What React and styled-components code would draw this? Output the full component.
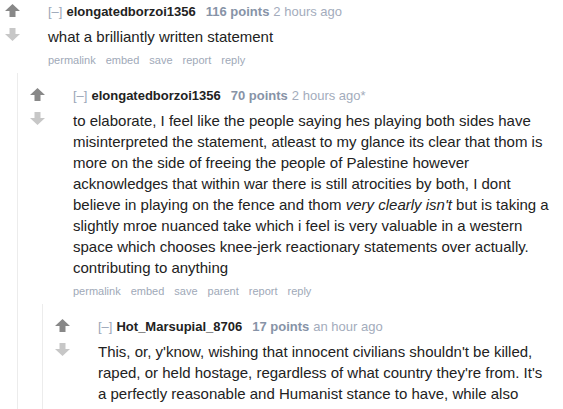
import React from 'react';
import styled, { createGlobalStyle, css } from 'styled-components';

const GlobalStyle = createGlobalStyle`
	html, body {
		margin: 0;
		padding: 0;
		background: #fff;
		font-family: 'Liberation Sans', Arial, sans-serif;
	}
`;

const Page = styled.div`
	width: 563px;
	height: 409px;
	overflow: hidden;
	padding-right: 11px;
	box-sizing: border-box;
`;

const CommentBox = styled.div`
	padding-top: 15px;

	${p =>
		p.$top
			? css`
					margin-left: -7px;
					padding-top: 4px;
			  `
			: css`
					margin-left: 24px;
					margin-top: 6px;
					border-left: 1px solid #ececec;
			  `};
`;

const Entry = styled.div`
	display: flex;
	align-items: flex-start;
`;

const Votes = styled.div`
	flex: 0 0 30px;
	margin-left: 4px;
	margin-right: 21px;
	display: flex;
	flex-direction: column;
	align-items: center;
	gap: 11px;
`;

const Content = styled.div`
	flex: 1;
	min-width: 0;
`;

const Tagline = styled.div`
	font-size: 13px;
	line-height: 16px;
	color: #a3acbc;
	white-space: nowrap;
`;

const Expand = styled.span`
	color: #9ba6b8;
	margin-right: 4px;
`;

const Author = styled.span`
	font-weight: bold;
	color: #222;
	margin-right: 10px;
`;

const Score = styled.span`
	font-weight: bold;
	color: #8793a7;
	margin-right: 4px;
`;

const Body = styled.div`
	margin-top: 6px;
	font-size: 15px;
	line-height: 21px;
	color: #222;

	p {
		margin: 0;
	}
`;

const Links = styled.ul`
	list-style: none;
	margin: 6px 0 0;
	padding: 0;
	display: flex;
	gap: 10px;
	font-size: 11px;
	line-height: 14px;
	color: #a0a9b8;
`;

const Arrow = ({ down }) => (
	<svg width="15" height="13" viewBox="0 0 15 13" style={{ display: 'block', transform: down ? 'scaleY(-1)' : 'none' }}>
		<polygon
			points="7.5,0 15,7 10.5,7 10.5,13 4.5,13 4.5,7 0,7"
			fill={down ? '#c7c7c7' : '#888888'}
		/>
	</svg>
);

const Comment = ({ top, author, points, time, links, children, body }) => (
	<CommentBox $top={top}>
		<Entry>
			<Votes>
				<Arrow />
				<Arrow down />
			</Votes>
			<Content>
				<Tagline>
					<Expand>[–]</Expand>
					<Author>{author}</Author>
					<Score>{points}</Score>
					{time}
				</Tagline>
				<Body>{body}</Body>
				<Links>
					{links.map(l => (
						<li key={l}>{l}</li>
					))}
				</Links>
			</Content>
		</Entry>
		{children}
	</CommentBox>
);

export default function App() {
	return (
		<Page>
			<GlobalStyle />
			<Comment
				top
				author="elongatedborzoi1356"
				points="116 points"
				time="2 hours ago"
				links={['permalink', 'embed', 'save', 'report', 'reply']}
				body={<p>what a brilliantly written statement</p>}
			>
				<Comment
					author="elongatedborzoi1356"
					points="70 points"
					time="2 hours ago*"
					links={['permalink', 'embed', 'save', 'parent', 'report', 'reply']}
					body={
						<p>
							to elaborate, I feel like the people saying hes playing both sides have misinterpreted the
							statement, atleast to my glance its clear that thom is more on the side of freeing the people
							of Palestine however acknowledges that within war there is still atrocities by both, I dont
							believe in playing on the fence and thom <em>very clearly isn't</em> but is taking a slightly
							mroe nuanced take which i feel is very valuable in a western space which chooses knee-jerk
							reactionary statements over actually. contributing to anything
						</p>
					}
				>
					<Comment
						author="Hot_Marsupial_8706"
						points="17 points"
						time="an hour ago"
						links={['permalink', 'embed', 'save', 'parent', 'report', 'reply']}
						body={
							<p>
								This, or, y'know, wishing that innocent civilians shouldn't be killed, raped, or held
								hostage, regardless of what country they're from. It's a perfectly reasonable and
								Humanist stance to have, while also
							</p>
						}
					/>
				</Comment>
			</Comment>
		</Page>
	);
}
